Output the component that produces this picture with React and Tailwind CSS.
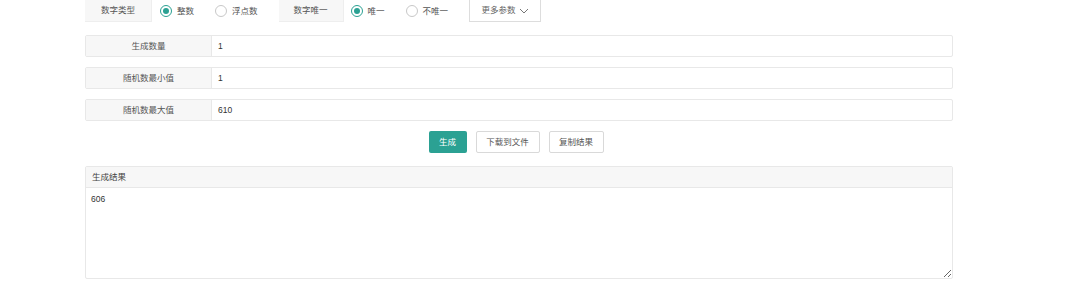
import React from 'react';

const font = { fontFamily: '"Liberation Sans", "Noto Sans CJK SC", sans-serif' };

function Radio({ checked, label }) {
    return (
        <label className="flex items-center gap-[5px] text-[#555]">
            <span className={`w-[12px] h-[12px] rounded-full border flex items-center justify-center bg-white ${checked ? 'border-[#2ba193]' : 'border-[#c8c8c8]'}`}>
                {checked && <span className="w-[6px] h-[6px] rounded-full bg-[#2ba193]" />}
            </span>
            <span>{label}</span>
        </label>
    );
}

function Row({ label, value }) {
    return (
        <div className="flex h-[22px] border border-[#e8e8e8] rounded-[2px]">
            <div className="w-[126px] bg-[#f7f7f7] border-r border-[#e8e8e8] flex items-center justify-center text-[#555]">{label}</div>
            <div className="flex items-center pl-[6px] text-[#333]">{value}</div>
        </div>
    );
}

export default function App() {
    return (
        <div className="w-[1080px] h-[303px] bg-white text-[8.5px]" style={font}>
            <div className="ml-[85px] w-[868px]">
                <div className="flex items-center h-[22px]">
                    <div className="w-[67px] h-[22px] bg-[#f7f7f7] border-r border-b border-[#eeeeee] flex items-center justify-center text-[#555]">数字类型</div>
                    <div className="ml-[8px] flex items-center gap-[21px]">
                        <Radio checked label="整数" />
                        <Radio label="浮点数" />
                    </div>
                    <div className="ml-[21px] w-[65px] h-[22px] bg-[#f7f7f7] border-r border-b border-[#eeeeee] flex items-center justify-center text-[#555]">数字唯一</div>
                    <div className="ml-[7px] flex items-center gap-[21px]">
                        <Radio checked label="唯一" />
                        <Radio label="不唯一" />
                    </div>
                    <div className="ml-[21px] w-[72px] h-[22px] border border-t-0 border-[#dddddd] flex items-center justify-center gap-[3px] text-[#666]">
                        更多参数
                        <svg width="10" height="6" viewBox="0 0 10 6" fill="none" stroke="#777" strokeWidth="1">
                            <path d="M1 1l4 4 4-4" />
                        </svg>
                    </div>
                </div>

                <div className="mt-[13px] flex flex-col gap-[10px]">
                    <Row label="生成数量" value="1" />
                    <Row label="随机数最小值" value="1" />
                    <Row label="随机数最大值" value="610" />
                </div>

                <div className="mt-[10px] flex justify-center gap-[9px] pr-[6px]">
                    <button className="w-[38px] h-[22px] bg-[#2ba193] text-white rounded-[2px]">生成</button>
                    <button className="w-[64px] h-[22px] border border-[#d9d9d9] bg-white text-[#555] rounded-[2px]">下载到文件</button>
                    <button className="w-[55px] h-[22px] border border-[#d9d9d9] bg-white text-[#555] rounded-[2px]">复制结果</button>
                </div>

                <div className="mt-[13px] border border-[#e8e8e8] rounded-[2px]">
                    <div className="h-[21px] bg-[#f7f7f7] border-b border-[#e8e8e8] flex items-center pl-[6px] text-[#444]">生成结果</div>
                    <textarea
                        className="block w-full h-[90px] px-[5px] py-[5px] outline-none resize-y text-[8.5px] text-[#333]"
                        style={font}
                        defaultValue="606"
                    />
                </div>
            </div>
        </div>
    );
}
